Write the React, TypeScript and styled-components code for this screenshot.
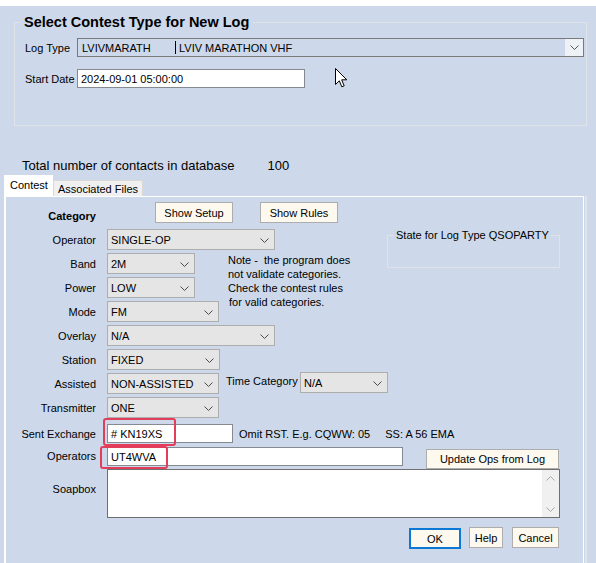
import React from "react";
import styled, { createGlobalStyle } from "styled-components";

const Global = createGlobalStyle`
  html, body { margin: 0; padding: 0; }
  body {
    font-family: "Liberation Sans", Arial, sans-serif;
    font-size: 11px;
    color: #000;
    background: #cdd9ea;
  }
  * { box-sizing: border-box; }
`;

const BG = "#cdd9ea";

const Page = styled.div`
  position: relative;
  width: 596px;
  height: 563px;
  background: ${BG};
  border-top: 6px solid #ffffff;
  display: flex;
  flex-direction: column;
  overflow: hidden;
`;

const GroupBox = styled.fieldset`
  margin: 8px 0 0 14px;
  padding: 0 0 37px 10px;
  width: 573px;
  min-width: 0;
  border: 1px solid #dfe3e8;
`;

const Legend = styled.legend`
  font-size: 14.5px;
  font-weight: bold;
  line-height: 17px;
  padding: 0 4px;
  margin-left: -5px;
`;

const FormLine = styled.div<{ $mt: number }>`
  display: flex;
  align-items: center;
  margin-top: ${(p) => p.$mt}px;
`;

const TopLabel = styled.div`
  width: 52px;
  white-space: nowrap;
`;

const Combo = styled.div`
  width: 507px;
  height: 19px;
  border: 1px solid #7a7a7a;
  background: ${BG};
  display: flex;
  align-items: stretch;
`;

const ComboText = styled.div`
  flex: 1;
  display: flex;
  align-items: center;
  padding-left: 4px;
  white-space: nowrap;
`;

const ComboCol = styled.span<{ $w?: number }>`
  display: inline-block;
  width: ${(p) => (p.$w ? `${p.$w}px` : "auto")};
`;

const Divider = styled.span`
  display: inline-block;
  width: 1px;
  height: 13px;
  background: #000;
  margin-right: 3px;
`;

const ComboArrow = styled.div`
  width: 18px;
  background: #eef2f7;
  display: flex;
  align-items: center;
  justify-content: center;
`;

const TextBox = styled.div<{ $w: number; $h?: number }>`
  width: ${(p) => p.$w}px;
  height: ${(p) => p.$h ?? 19}px;
  background: #ffffff;
  border: 1px solid #858a90;
  display: flex;
  align-items: center;
  padding-left: 3px;
  white-space: nowrap;
`;

const Cursor = styled.svg`
  position: absolute;
  left: 335px;
  top: 62px;
`;

const CountLine = styled.div`
  margin: 32px 0 0 22px;
  font-size: 13px;
  line-height: 15px;
  display: flex;
`;

const CountValue = styled.span`
  margin-left: 33px;
`;

const TabBar = styled.div`
  display: flex;
  align-items: flex-end;
  margin-top: 2px;
  padding-left: 4px;
  position: relative;
  z-index: 2;
  margin-bottom: -1px;
`;

const Tab = styled.div<{ $active?: boolean }>`
  height: ${(p) => (p.$active ? 22 : 16)}px;
  padding: ${(p) => (p.$active ? "3px 5px 0 6px" : "1px 4px 0 4px")};
  background: ${(p) => (p.$active ? "#ffffff" : "#f0f0f0")};
  border: ${(p) => (p.$active ? "none" : "1px solid #d9d9d9")};
  border-bottom: none;
  line-height: 14px;
  white-space: nowrap;
  margin-bottom: ${(p) => (p.$active ? 0 : 1)}px;
`;

const Panel = styled.div`
  flex: 1;
  margin-left: 4px;
  width: 580px;
  border-left: 2px solid #ffffff;
  border-top: 1px solid #ffffff;
  border-right: 1px solid #ffffff;
  box-shadow: 1px 0 0 0 ${BG}, 3px 0 0 0 #e1e4e8;
  padding-top: 5px;
  display: flex;
  flex-direction: column;
`;

const CategoryGrid = styled.div`
  display: grid;
  grid-template-columns: 101px 121px 72px 87px 173px;
  grid-template-rows: 24px repeat(8, 21px);
  row-gap: 3px;
`;

const RowLabel = styled.div<{ $row: number; $bold?: boolean }>`
  grid-column: 1;
  grid-row: ${(p) => p.$row};
  padding-right: 11px;
  text-align: right;
  white-space: nowrap;
  font-weight: ${(p) => (p.$bold ? "bold" : "normal")};
  line-height: 14px;
  align-self: ${(p) => (p.$bold ? "start" : "center")};
  margin-top: ${(p) => (p.$bold ? 7 : 0)}px;
`;

const ButtonStrip = styled.div`
  grid-column: 2 / span 4;
  grid-row: 1;
  display: flex;
  gap: 27px;
  padding-left: 48px;
  align-self: start;
`;

const Button = styled.div<{ $w: number; $h?: number; $default?: boolean }>`
  width: ${(p) => p.$w}px;
  height: ${(p) => p.$h ?? 21}px;
  background: #fdf9ef;
  border: ${(p) => (p.$default ? "2px solid #0a78d4" : "1px solid #adadad")};
  display: flex;
  align-items: center;
  justify-content: center;
  white-space: nowrap;
  line-height: 14px;
`;

const Select = styled.div<{ $w: number; $row: number; $col?: string }>`
  grid-column: ${(p) => p.$col ?? "2 / span 3"};
  grid-row: ${(p) => p.$row};
  justify-self: start;
  width: ${(p) => p.$w}px;
  height: 21px;
  background: #e5e5e5;
  border: 1px solid #adadad;
  display: flex;
  align-items: center;
  justify-content: space-between;
  padding: 1px 5px 0 3px;
  white-space: nowrap;
`;

const StateGroup = styled.fieldset`
  grid-column: 5;
  grid-row: 2 / span 2;
  align-self: start;
  margin: 0;
  padding: 0 0 25px 0;
  min-width: 0;
  border: 1px solid #dfe3e8;
`;

const SmallLegend = styled.legend`
  font-size: 11px;
  line-height: 13px;
  padding: 0 2px;
  margin-left: 6px;
`;

const Note = styled.div`
  grid-column: 3 / span 2;
  grid-row: 3 / span 3;
  align-self: start;
  line-height: 14px;
  white-space: pre;
`;

const NoteLine = styled.div<{ $indent?: number }>`
  padding-left: ${(p) => p.$indent ?? 0}px;
`;

const SideLabel = styled.div`
  grid-column: 3;
  grid-row: 8;
  align-self: start;
  margin: 1px 0 0 -2px;
  line-height: 14px;
  white-space: nowrap;
`;

const BottomRow = styled.div<{ $mt: number; $top?: boolean }>`
  display: flex;
  align-items: ${(p) => (p.$top ? "flex-start" : "center")};
  margin-top: ${(p) => p.$mt}px;
`;

const BottomLabel = styled.div<{ $pt?: number }>`
  width: 101px;
  padding-right: 11px;
  text-align: right;
  white-space: nowrap;
  line-height: 14px;
  padding-top: ${(p) => p.$pt ?? 0}px;
`;

const FieldWrap = styled.div`
  position: relative;
`;

const Highlight = styled.div<{ $l: number; $t: number; $w: number; $h: number }>`
  position: absolute;
  left: ${(p) => p.$l}px;
  top: ${(p) => p.$t}px;
  width: ${(p) => p.$w}px;
  height: ${(p) => p.$h}px;
  border: 2px solid #e23e5c;
  border-radius: 3px;
  pointer-events: none;
`;

const Hint = styled.div`
  margin-left: 6px;
  white-space: nowrap;
  display: flex;
`;

const HintPart = styled.span<{ $ml?: number }>`
  margin-left: ${(p) => p.$ml ?? 0}px;
`;

const SideButton = styled.div`
  margin: 2px 0 0 23px;
`;

const Memo = styled.div`
  width: 453px;
  height: 49px;
  background: #ffffff;
  border: 1px solid #6f6f6f;
  display: flex;
  justify-content: flex-end;
`;

const ScrollBar = styled.div`
  width: 17px;
  background: #f0f0f0;
  display: flex;
  flex-direction: column;
  justify-content: space-between;
  align-items: center;
  padding: 6px 0 5px;
`;

const DialogButtons = styled.div`
  display: flex;
  justify-content: flex-end;
  align-items: flex-start;
  margin-top: 9px;
  padding-right: 24px;
`;

const ButtonGap = styled.div<{ $w: number }>`
  width: ${(p) => p.$w}px;
`;

const Chevron = ({ color = "#4a4a4a", up = false }: { color?: string; up?: boolean }) => (
  <svg width="9" height="5" viewBox="0 0 9 5">
    <path
      d={up ? "M0.5 4.5 L4.5 0.5 L8.5 4.5" : "M0.5 0.5 L4.5 4.5 L8.5 0.5"}
      fill="none"
      stroke={color}
      strokeWidth="1"
    />
  </svg>
);

type Sel = { label: string; value: string; w: number; col?: string };

const selects: Sel[] = [
  { label: "Operator", value: "SINGLE-OP", w: 168 },
  { label: "Band", value: "2M", w: 88 },
  { label: "Power", value: "LOW", w: 88 },
  { label: "Mode", value: "FM", w: 112 },
  { label: "Overlay", value: "N/A", w: 168 },
  { label: "Station", value: "FIXED", w: 113 },
  { label: "Assisted", value: "NON-ASSISTED", w: 112 },
  { label: "Transmitter", value: "ONE", w: 112 },
];

export default function App() {
  return (
    <>
      <Global />
      <Page>
        <GroupBox>
          <Legend>Select Contest Type for New Log</Legend>
          <FormLine $mt={7}>
            <TopLabel>Log Type</TopLabel>
            <Combo>
              <ComboText>
                <ComboCol $w={93}>LVIVMARATH</ComboCol>
                <Divider />
                <ComboCol>LVIV MARATHON VHF</ComboCol>
              </ComboText>
              <ComboArrow>
                <Chevron color="#555" />
              </ComboArrow>
            </Combo>
          </FormLine>
          <FormLine $mt={12}>
            <TopLabel>Start Date</TopLabel>
            <TextBox $w={228}>2024-09-01 05:00:00</TextBox>
          </FormLine>
        </GroupBox>

        <Cursor width="13" height="20" viewBox="0 0 13 20">
          <path
            d="M0.5 0.5 L0.5 16.5 L4.3 12.8 L6.8 18.8 L9.2 17.8 L6.7 11.8 L11.8 11.8 Z"
            fill="#ffffff"
            stroke="#000000"
            strokeWidth="1"
            strokeLinejoin="miter"
          />
        </Cursor>

        <CountLine>
          <span>Total number of contacts in database</span>
          <CountValue>100</CountValue>
        </CountLine>

        <TabBar>
          <Tab $active>Contest</Tab>
          <Tab>Associated Files</Tab>
        </TabBar>

        <Panel>
          <CategoryGrid>
            <RowLabel $row={1} $bold>
              Category
            </RowLabel>
            <ButtonStrip>
              <Button $w={78}>Show Setup</Button>
              <Button $w={78}>Show Rules</Button>
            </ButtonStrip>

            {selects.map((s, i) => (
              <React.Fragment key={s.label}>
                <RowLabel $row={i + 2}>{s.label}</RowLabel>
                <Select $row={i + 2} $w={s.w}>
                  <span>{s.value}</span>
                  <Chevron />
                </Select>
              </React.Fragment>
            ))}

            <StateGroup>
              <SmallLegend>State for Log Type QSOPARTY</SmallLegend>
            </StateGroup>

            <Note>
              <NoteLine>Note -  the program does</NoteLine>
              <NoteLine>not validate categories.</NoteLine>
              <NoteLine>Check the contest rules</NoteLine>
              <NoteLine $indent={1}>for valid categories.</NoteLine>
            </Note>

            <SideLabel>Time Category</SideLabel>
            <Select $row={8} $col="4 / span 2" $w={88} style={{ marginTop: -1 }}>
              <span>N/A</span>
              <Chevron />
            </Select>
          </CategoryGrid>

          <BottomRow $mt={6}>
            <BottomLabel>Sent Exchange</BottomLabel>
            <FieldWrap>
              <TextBox $w={126}># KN19XS</TextBox>
              <Highlight $l={-4} $t={-6} $w={73} $h={28} />
            </FieldWrap>
            <Hint>
              <HintPart>Omit RST. E.g. CQWW: 05</HintPart>
              <HintPart $ml={15}>SS: A 56 EMA</HintPart>
            </Hint>
          </BottomRow>

          <BottomRow $mt={4} $top>
            <BottomLabel $pt={2}>Operators</BottomLabel>
            <FieldWrap>
              <TextBox $w={296}>UT4WVA</TextBox>
              <Highlight $l={-7} $t={-1} $w={68} $h={23} />
            </FieldWrap>
            <SideButton>
              <Button $w={133} $h={20}>
                Update Ops from Log
              </Button>
            </SideButton>
          </BottomRow>

          <BottomRow $mt={0} $top>
            <BottomLabel $pt={13}>Soapbox</BottomLabel>
            <Memo>
              <ScrollBar>
                <Chevron up color="#a8a8a8" />
                <Chevron color="#a8a8a8" />
              </ScrollBar>
            </Memo>
          </BottomRow>

          <DialogButtons>
            <Button $w={52} $default style={{ marginTop: 1 }}>
              OK
            </Button>
            <ButtonGap $w={8} />
            <Button $w={34}>Help</Button>
            <ButtonGap $w={9} />
            <Button $w={47}>Cancel</Button>
          </DialogButtons>
        </Panel>
      </Page>
    </>
  );
}
